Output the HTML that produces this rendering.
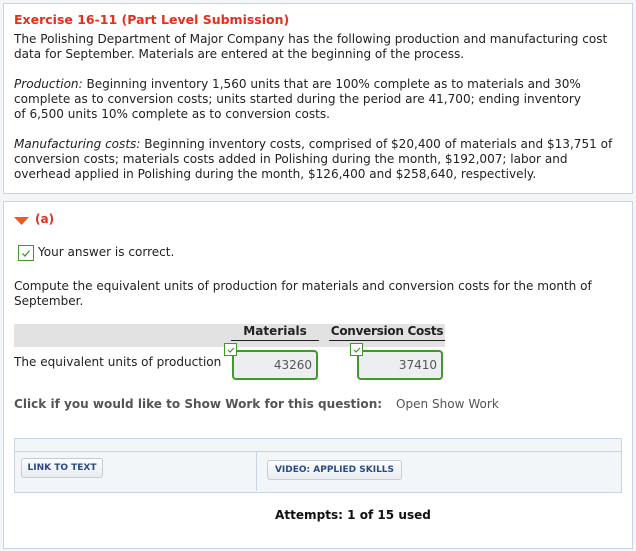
<!DOCTYPE html>
<html><head><meta charset="utf-8"><style>
body{margin:0;width:636px;height:551px;background:#f3f6f9;font-family:"DejaVu Sans","Liberation Sans",sans-serif;color:#222;position:relative;overflow:hidden}
.a{position:absolute;white-space:nowrap;font-size:12.05px;line-height:15px}
.box{position:absolute;background:#fff;border:1px solid #c9d4e2}
i{font-style:italic}
.btn{position:absolute;background:linear-gradient(#fbfcfd,#e9edf2);border:1px solid #c5ccd6;border-radius:3px;font-size:9px;font-weight:bold;color:#2a4a85;text-align:center;box-sizing:border-box}
.inp{position:absolute;border:2px solid #3f9a2a;border-radius:4px;background:#eceef0;box-sizing:border-box;font-size:12px;color:#555;text-align:right;padding-right:4px;line-height:26px}
.ck{position:absolute;width:13px;height:13px;border:1.5px solid #3f9a2a;background:#fff;box-sizing:border-box}
.ck svg{position:absolute;left:1px;top:1px}
</style></head><body>
<div class="box" style="left:3px;top:3px;width:628px;height:189px"></div>
<div class="a" style="left:14px;top:12px;font-weight:bold;color:#e2301c;font-size:12.5px">Exercise 16-11 (Part Level Submission)</div>
<div class="a" style="left:14px;top:32px">The Polishing Department of Major Company has the following production and manufacturing cost</div>
<div class="a" style="left:14px;top:47px">data for September. Materials are entered at the beginning of the process.</div>
<div class="a" style="left:14px;top:77px"><i>Production:</i> Beginning inventory 1,560 units that are 100% complete as to materials and 30%</div>
<div class="a" style="left:14px;top:92px">complete as to conversion costs; units started during the period are 41,700; ending inventory</div>
<div class="a" style="left:14px;top:107px">of 6,500 units 10% complete as to conversion costs.</div>
<div class="a" style="left:14px;top:137px"><i>Manufacturing costs:</i> Beginning inventory costs, comprised of $20,400 of materials and $13,751 of</div>
<div class="a" style="left:14px;top:152px">conversion costs; materials costs added in Polishing during the month, $192,007; labor and</div>
<div class="a" style="left:14px;top:167px">overhead applied in Polishing during the month, $126,400 and $258,640, respectively.</div>

<div class="box" style="left:3px;top:201px;width:628px;height:346px"></div>
<svg style="position:absolute;left:14px;top:217px" width="15" height="8"><polygon points="0,0 15,0 7.5,8" fill="#f05a1e"/></svg>
<div class="a" style="left:35px;top:212px;font-weight:bold;color:#e2301c">(a)</div>
<div class="ck" style="left:18px;top:245px;width:16px;height:16px"><svg width="12" height="12"><path d="M2.5 6.5 L5 9 L9.5 3.5" stroke="#3f9a2a" stroke-width="1.3" fill="none"/></svg></div>
<div class="a" style="left:38px;top:245px">Your answer is correct.</div>
<div class="a" style="left:14px;top:279px">Compute the equivalent units of production for materials and conversion costs for the month of</div>
<div class="a" style="left:14px;top:294px">September.</div>
<div style="position:absolute;left:14px;top:324px;width:431px;height:23px;background:#e2e2e2"></div>
<div class="a" style="left:231px;top:324px;width:88px;text-align:center;font-weight:bold;border-bottom:1px solid #222;height:16px">Materials</div>
<div class="a" style="left:329px;top:324px;width:116px;text-align:center;font-weight:bold;border-bottom:1px solid #222;height:16px;letter-spacing:-0.3px">Conversion Costs</div>
<div class="a" style="left:14px;top:355px">The equivalent units of production</div>
<div class="inp" style="left:232px;top:350px;width:86px;height:30px">43260</div>
<div class="inp" style="left:357px;top:350px;width:86px;height:30px">37410</div>
<div class="ck" style="left:224px;top:343px"><svg width="10" height="10"><path d="M2 5 L4 7 L8 3" stroke="#3f9a2a" stroke-width="1.2" fill="none"/></svg></div>
<div class="ck" style="left:350px;top:343px"><svg width="10" height="10"><path d="M2 5 L4 7 L8 3" stroke="#3f9a2a" stroke-width="1.2" fill="none"/></svg></div>
<div class="a" style="left:14px;top:397px;font-weight:bold;color:#555">Click if you would like to Show Work for this question:</div>
<div class="a" style="left:396px;top:397px;color:#555">Open Show Work</div>
<div style="position:absolute;left:14px;top:438px;width:606px;height:53px;border:1px solid #c9d4e2;background:#f3f6f9"></div>
<div style="position:absolute;left:15px;top:451px;width:606px;height:1px;background:#c9d4e2"></div>
<div style="position:absolute;left:256px;top:452px;width:1px;height:39px;background:#c9d4e2"></div>
<div class="btn" style="left:21px;top:458px;width:82px;height:20px;line-height:18px">LINK TO TEXT</div>
<div class="btn" style="left:267px;top:460px;width:135px;height:20px;line-height:18px">VIDEO: APPLIED SKILLS</div>
<div class="a" style="left:275px;top:508px;font-weight:bold;color:#111">Attempts: 1 of 15 used</div>
</body></html>
